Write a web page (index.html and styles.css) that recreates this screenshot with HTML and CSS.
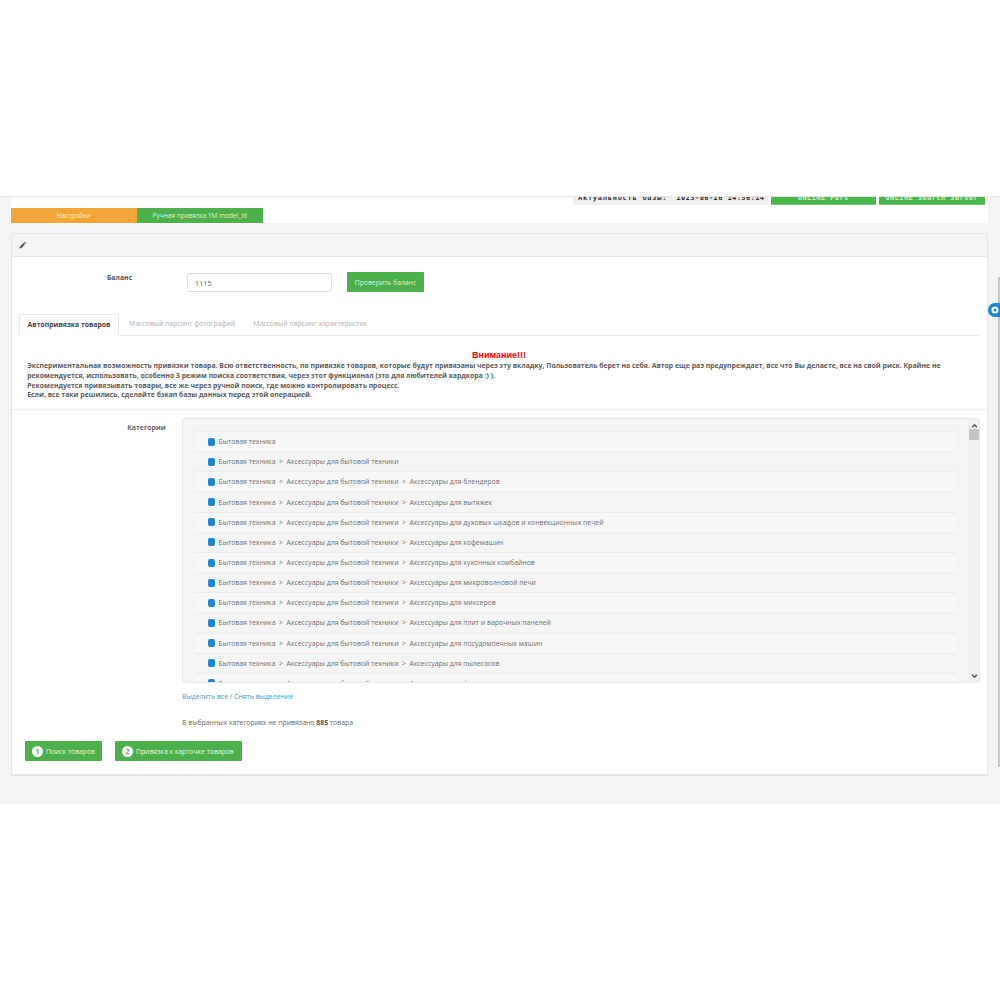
FILE: index.html
```html
<!DOCTYPE html>
<html lang="ru">
<head>
<meta charset="utf-8">
<title>Автопривязка товаров</title>
<link rel="stylesheet" href="styles.css">
</head>
<body>
<div class="blank"></div>
<main class="app">
  <section class="top">
    <div class="status-row">
      <div class="fresh"><span class="fresh-label">Актуальность базы:</span>&nbsp;&nbsp;2023-06-26 14:56:14</div>
      <div class="online">ONLINE Pars</div>
      <div class="online">ONLINE Search Server</div>
    </div>
    <nav class="main-tabs">
      <div class="main-tab orange">Настройки</div>
      <div class="main-tab green">Ручная привязка YM model_id</div>
    </nav>
  </section>
  <section class="panel">
    <header class="panel-head">
      <svg class="pencil" viewBox="0 0 12 12"><path d="M8.6 1.2l2.2 2.2-1.2 1.2-2.2-2.2zM6.7 3.1l2.2 2.2-5.2 5.2-3 .8.8-3z" fill="#555"/></svg>
    </header>
    <div class="balance">
      <label class="balance-label">Баланс</label>
      <input class="balance-input" value="1115" readonly>
      <button class="btn check">Проверить баланс</button>
    </div>
    <div class="tabs">
      <div class="tab active">Автопривязка товаров</div>
      <div class="tab tab-photo">Массовый парсинг фотографий</div>
      <div class="tab tab-spec">Массовый парсинг характеристик</div>
    </div>
    <h3 class="attention">Внимание!!!</h3>
    <div class="warning">
      Экспериментальная возможность привязки товара. Всю ответственность, по привязке товаров, которые будут привязаны через эту вкладку, Пользователь берет на себя. Автор еще раз предупреждает, все что Вы делаете, все на свой риск. Крайне не рекомендуется, использовать, особенно 3 режим поиска соответствия, через этот функционал (это для любителей хардкора :) ).<br>
      Рекомендуется привязывать товары, все же через ручной поиск, где можно контролировать процесс.<br>
      Если, все таки решились, сделайте бэкап базы данных перед этой операцией.
    </div>
    <div class="cat-section">
      <div class="cat-label">Категории</div>
      <div class="cat-main">
        <div class="cat-box">
          <ul class="cat-list">
            <li><i></i>Бытовая техника</li>
            <li><i></i>Бытовая техника&nbsp; &gt;&nbsp; Аксессуары для бытовой техники</li>
            <li><i></i>Бытовая техника&nbsp; &gt;&nbsp; Аксессуары для бытовой техники&nbsp; &gt;&nbsp; Аксессуары для блендеров</li>
            <li><i></i>Бытовая техника&nbsp; &gt;&nbsp; Аксессуары для бытовой техники&nbsp; &gt;&nbsp; Аксессуары для вытяжек</li>
            <li><i></i>Бытовая техника&nbsp; &gt;&nbsp; Аксессуары для бытовой техники&nbsp; &gt;&nbsp; Аксессуары для духовых шкафов и конвекционных печей</li>
            <li><i></i>Бытовая техника&nbsp; &gt;&nbsp; Аксессуары для бытовой техники&nbsp; &gt;&nbsp; Аксессуары для кофемашин</li>
            <li><i></i>Бытовая техника&nbsp; &gt;&nbsp; Аксессуары для бытовой техники&nbsp; &gt;&nbsp; Аксессуары для кухонных комбайнов</li>
            <li><i></i>Бытовая техника&nbsp; &gt;&nbsp; Аксессуары для бытовой техники&nbsp; &gt;&nbsp; Аксессуары для микроволновой печи</li>
            <li><i></i>Бытовая техника&nbsp; &gt;&nbsp; Аксессуары для бытовой техники&nbsp; &gt;&nbsp; Аксессуары для миксеров</li>
            <li><i></i>Бытовая техника&nbsp; &gt;&nbsp; Аксессуары для бытовой техники&nbsp; &gt;&nbsp; Аксессуары для плит и варочных панелей</li>
            <li><i></i>Бытовая техника&nbsp; &gt;&nbsp; Аксессуары для бытовой техники&nbsp; &gt;&nbsp; Аксессуары для посудомоечных машин</li>
            <li><i></i>Бытовая техника&nbsp; &gt;&nbsp; Аксессуары для бытовой техники&nbsp; &gt;&nbsp; Аксессуары для пылесосов</li>
            <li><i></i>Бытовая техника&nbsp; &gt;&nbsp; Аксессуары для бытовой техники&nbsp; &gt;&nbsp; Аксессуары для фильтров</li>
          </ul>
          <div class="scroll">
            <svg class="arrow" viewBox="0 0 8 6"><path d="M1 5l3-3 3 3" fill="none" stroke="#555" stroke-width="1.6"/></svg>
            <div class="thumb"></div>
            <svg class="arrow arrow-down" viewBox="0 0 8 6"><path d="M1 1l3 3 3-3" fill="none" stroke="#555" stroke-width="1.6"/></svg>
          </div>
        </div>
        <div class="links"><a>Выделить все</a> / <a>Снять выделение</a></div>
        <div class="info">В выбранных категориях не привязано <b>885</b> товара</div>
      </div>
    </div>
    <div class="actions">
      <button class="btn act act-1"><span class="num">1</span>Поиск товаров</button>
      <button class="btn act act-2"><span class="num">2</span>Привязка к карточке товаров</button>
    </div>
  </section>
  <div class="page-scroll"></div>
  <div class="gear">
    <svg viewBox="0 0 12 12"><circle cx="6" cy="6" r="3" fill="none" stroke="#fff" stroke-width="2.4"/></svg>
  </div>
</main>
</body>
</html>
```
FILE: styles.css
```css
* { box-sizing: border-box; }
html, body { margin: 0; padding: 0; background: #fff; }
body { font-family: "Open Sans", "Noto Sans", sans-serif; font-size: 6.88px; color: #666; height: 1000px; overflow: hidden; }
.blank { height: 196px; }
.app { position: relative; height: 608px; background: #f4f4f4; border-top: 1px solid #e6e6e6; padding: 0 12.5px 0 10.7px; }

.top { height: 26px; background: #fff; }
.status-row { height: 11px; overflow: hidden; display: flex; justify-content: flex-end; align-items: flex-end; padding: 0 3px 3px 0; gap: 3px; }
.fresh, .online { height: 20px; line-height: 27px; font-family: "DejaVu Sans Mono", monospace; font-weight: 700; font-size: 7px; letter-spacing: .42px; white-space: nowrap; }
.fresh { width: 195px; padding-left: 5.5px; background: #f0f0f0; color: #333; }
.fresh-label { letter-spacing: .74px; }
.online { width: 105.5px; background: #4cb64c; border-bottom: 1px solid #79c979; color: #cfeccf; text-align: center; }
.main-tabs { display: flex; }
.main-tab { width: 126px; height: 15px; line-height: 15px; text-align: center; font-size: 6.5px; }
.orange { background: #f3a537; color: #fbeed6; }
.green { background: #4cb04c; color: #dff3df; }

.panel { position: relative; margin-top: 10px; height: 543px; background: #fff; border: 1px solid #e6e6e6; border-bottom-width: 2px; }
.panel-head { height: 23px; background: #f4f4f4; border-bottom: 1px solid #e6e6e6; padding: 7px; display: flex; }
.pencil { width: 8px; height: 8px; }

.balance { display: flex; align-items: flex-start; height: 57px; padding-top: 15px; }
.balance-label { margin: 1px 0 0 95.3px; width: 80px; font-weight: 700; color: #555; line-height: 10px; }
.balance-input { width: 145px; height: 19px; margin-top: 1px; padding: 0 7px; border: 1px solid #e0e0e0; border-radius: 2px; font: 7.3px "Open Sans", sans-serif; color: #666; background: #fff; outline: none; }
.btn { border: 0; background: #4cb04c; color: #d9f0d9; font-family: "Open Sans", sans-serif; font-size: 6.8px; border-radius: 1px; padding: 0; }
.check { width: 77px; height: 20px; margin-left: 15px; }

.tabs { display: flex; margin: 0 8px 0 7.3px; height: 22px; border-bottom: 1px solid #e8e8e8; }
.tab { height: 22px; line-height: 20px; text-align: center; color: #b0b0b0; white-space: nowrap; }
.tab.active { width: 100px; background: #fff; border: 1px solid #e8e8e8; border-bottom-color: #fff; color: #444; font-weight: 700; }
.tab-photo { padding-left: 10px; }
.tab-spec { margin-left: 18px; }

.attention { margin: 13px 0 0; height: 12px; text-align: center; color: #f00; font-size: 9px; line-height: 13px; font-weight: 700; font-family: "Liberation Sans", sans-serif; }
.warning { padding: 0 16px 0 15.5px; height: 49px; font-weight: 700; line-height: 9.8px; color: #5c5c5c; border-bottom: 1px solid #ececec; }

.cat-section { display: flex; padding-top: 8px; }
.cat-label { width: 154px; text-align: right; font-weight: 700; line-height: 22px; margin: -1px 16.3px 0 0; height: 20px; }
.cat-main { width: 798px; }
.cat-box { position: relative; height: 265px; background: #f4f4f4; border: 1px solid #e8e8e8; border-radius: 3px; overflow: hidden; padding: 12px 0 0 12px; }
.cat-list { list-style: none; margin: 0; padding: 0; width: 761px; }
.cat-list li { height: 20.17px; display: flex; align-items: center; padding-left: 13px; background: #f7f7f7; border-top: 1px solid #ececec; color: #707070; white-space: pre; }
.cat-list li:nth-child(even) { background: #f4f4f4; }
.cat-list i { width: 7.5px; height: 8px; background: #1a87d8; border-radius: 2px; margin-right: 3px; flex: none; }
.scroll { position: absolute; top: 0; right: 0; bottom: 0; width: 10px; background: #f1f1f1; }
.arrow { position: absolute; left: 2px; top: 4px; width: 7px; height: 5px; }
.arrow-down { top: auto; bottom: 3px; }
.thumb { position: absolute; left: 0; top: 10px; width: 10px; height: 11px; background: #c4c4c4; }

.links { margin-top: 9px; line-height: 10px; color: #5a7f99; }
.links a { color: #3d9bc9; }
.info { margin-top: 16px; line-height: 10px; }
.info b { color: #555; }

.actions { position: absolute; left: 13.3px; top: 507px; display: flex; gap: 13px; }
.act { height: 20px; display: flex; align-items: center; padding-left: 7px; color: #e4f5e4; }
.act-1 { width: 77px; }
.act-2 { width: 127px; }
.num { width: 11px; height: 11px; border-radius: 50%; background: #fff; color: #4cb04c; font-weight: 700; font-size: 7px; line-height: 11px; text-align: center; margin-right: 3px; flex: none; }

.page-scroll { position: absolute; right: 0; top: 80px; width: 2px; height: 490px; background: #c8c8c8; }
.gear { position: absolute; right: 0; top: 106px; width: 12.5px; height: 14px; background: #1a87d0; border-radius: 7px 0 0 7px; display: flex; align-items: center; padding-left: 2.5px; }
.gear svg { width: 10px; height: 10px; flex: none; }
```
